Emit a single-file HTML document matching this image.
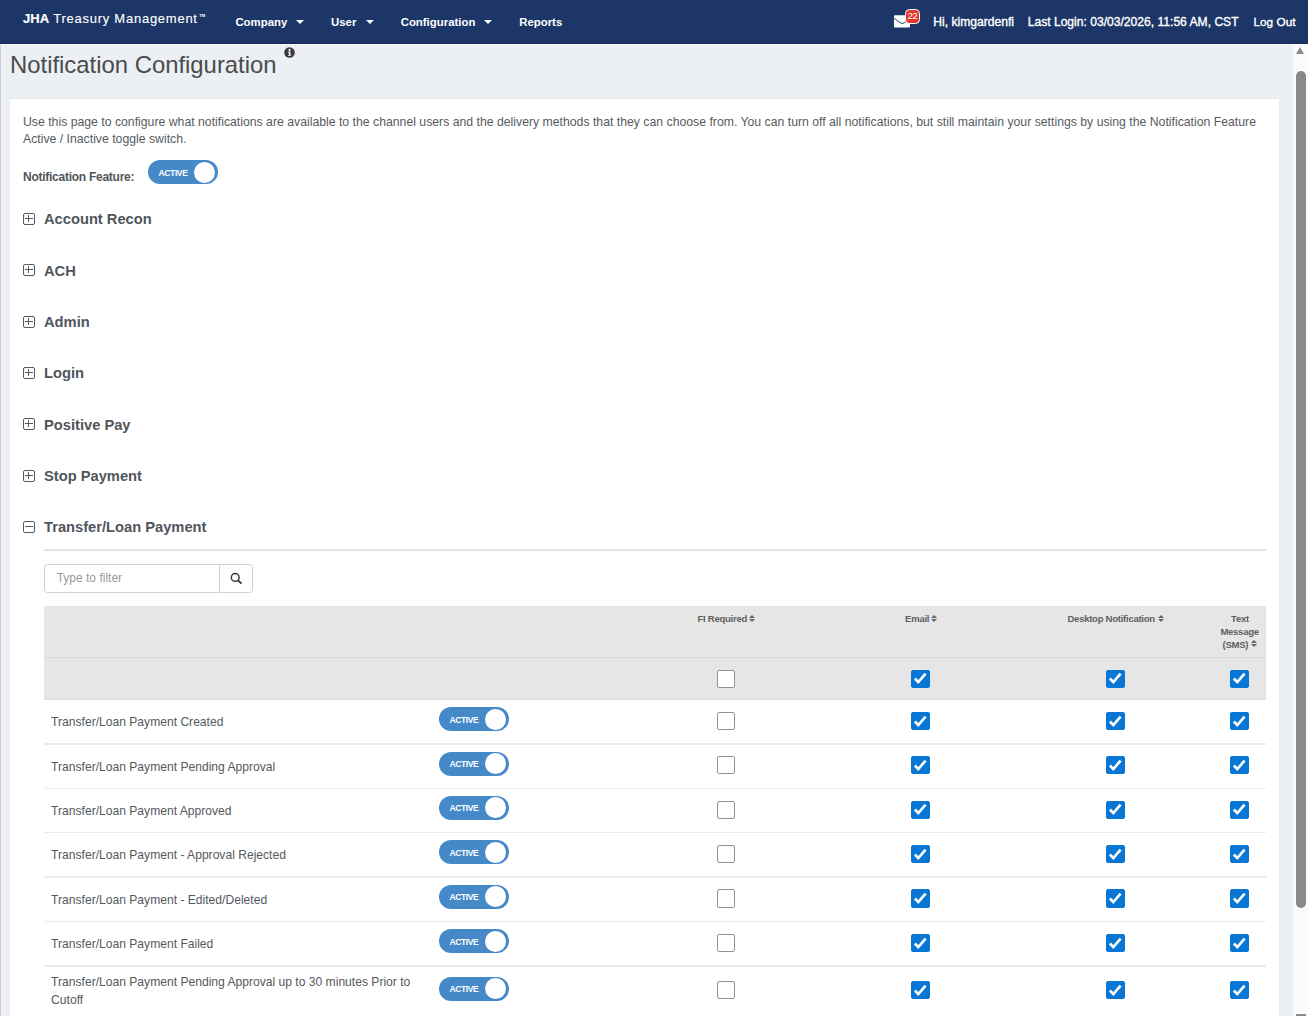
<!DOCTYPE html>
<html><head><meta charset="utf-8"><title>Notification Configuration</title>
<style>
*{box-sizing:border-box;margin:0;padding:0}
html,body{width:1308px;height:1016px;overflow:hidden;background:#ecf0f4;font-family:"Liberation Sans",sans-serif}
.t{position:absolute;white-space:nowrap}
#hdr{position:absolute;left:0;top:0;width:1308px;height:44px;background:#1d3668;border-bottom:2px solid #18305f}
#bg{position:absolute;left:0;top:44px;width:1293px;height:972px;background:#ecf0f4;border-top:1px solid #f4f4f2}
#ledge{position:absolute;left:0;top:45px;width:1px;height:971px;background:#c9cdd2}
.caret{position:absolute;width:0;height:0;border-left:4px solid transparent;border-right:4px solid transparent;border-top:4.5px solid #fff}
#badge{position:absolute;left:905px;top:8.8px;width:15.2px;height:15.2px;border-radius:4.5px;background:#e13b30;border:1.3px solid #fff;color:#fff;font-size:9.3px;line-height:12.2px;text-align:center;letter-spacing:-0.3px}
#info{position:absolute;left:283.6px;top:47px}
#card{position:absolute;left:9.1px;top:98.2px;width:1271px;height:940px;background:#fff;border:1px solid #e7ebef;border-radius:2px}
.tog{position:absolute;width:69.5px;height:24px;border-radius:12px;background:#4689c9}
.tog span{position:absolute;left:10.3px;top:7.4px;font-size:8.6px;line-height:11px;font-weight:bold;color:#fff;letter-spacing:-0.45px}
.tog i{position:absolute;right:2.9px;top:1.4px;width:21px;height:21px;border-radius:50%;background:#fff}
.pm{position:absolute;width:12px;height:12px;border:1px solid #555a62;border-radius:2px}
.pm:before{content:"";position:absolute;left:1px;top:4px;width:8px;height:1px;background:#555a62}
.pm:after{content:"";position:absolute;left:4px;top:1px;width:1px;height:7px;background:#555a62}
.pm.minus:after{display:none}
#hr{position:absolute;left:44px;top:549px;width:1222px;height:2px;background:#e4e4e4}
#filter{position:absolute;left:44px;top:563.6px;width:176px;height:29.4px;border:1.3px solid #d0d0d0;border-radius:3.5px 0 0 3.5px}
#fbtn{position:absolute;left:219px;top:563.6px;width:33.5px;height:29.4px;border:1.3px solid #d0d0d0;border-radius:0 3.5px 3.5px 0}
#th1{position:absolute;left:44px;top:606px;width:1222px;height:52px;background:#e6e6e6;border-bottom:1px solid #d9d9d9}
#th2{position:absolute;left:44px;top:658px;width:1222px;height:41.6px;background:#e6e6e6;border-bottom:1px solid #dddddd}
.sort{position:absolute;width:6px;height:8px}
.sort:before{content:"";position:absolute;left:0;top:0;border-left:3px solid transparent;border-right:3px solid transparent;border-bottom:3.3px solid #666}
.sort:after{content:"";position:absolute;left:0;top:4.1px;border-left:3px solid transparent;border-right:3px solid transparent;border-top:3.3px solid #666}
.cb{position:absolute;width:18.3px;height:18.2px;border:1.25px solid #939393;border-radius:2px;background:#fff}
.cb.on{background:#0876d4;border-color:#0876d4}
.cb svg{position:absolute;left:-1.25px;top:-1.25px}
.rowb{position:absolute;left:44px;width:1222px;height:1.5px;background:#ebebeb}
#sb{position:absolute;left:1293px;top:44px;width:15px;height:972px;background:#fafafa}
#sbup{position:absolute;left:1296px;top:47px;width:0;height:0;border-left:4.75px solid transparent;border-right:4.75px solid transparent;border-bottom:7px solid #8a8a8a}
#sbdn{position:absolute;left:1296px;top:1014px;width:9.5px;height:2px;background:#8a8a8a}
#thumb{position:absolute;left:1296px;top:71px;width:9.5px;height:836.5px;border-radius:5px;background:#898989}
</style></head>
<body>
<div id="hdr"></div>
<div class="t" style="left:23.00px;top:11.00px;font-size:13px;line-height:15.6px;color:#fff;font-weight:bold;letter-spacing:0.1px;-webkit-text-stroke:0.2px #fff;">JHA</div>
<div class="t" style="left:53.20px;top:11.20px;font-size:13px;line-height:15.6px;color:#fff;letter-spacing:0.75px;-webkit-text-stroke:0.12px #fff;">Treasury Management</div>
<div class="t" style="left:199.3px;top:13px;font-size:4.2px;line-height:5px;color:#fff;font-weight:bold;letter-spacing:-0.2px">TM</div>
<div class="t" style="left:235.40px;top:15.91px;font-size:11.4px;line-height:13.68px;color:#fff;font-weight:bold;">Company</div>
<div class="t" style="left:331.00px;top:15.91px;font-size:11.4px;line-height:13.68px;color:#fff;font-weight:bold;">User</div>
<div class="t" style="left:400.70px;top:15.91px;font-size:11.4px;line-height:13.68px;color:#fff;font-weight:bold;">Configuration</div>
<div class="t" style="left:519.20px;top:15.91px;font-size:11.4px;line-height:13.68px;color:#fff;font-weight:bold;">Reports</div>
<div class="caret" style="left:295.6px;top:20.3px"></div>
<div class="caret" style="left:365.7px;top:20.3px"></div>
<div class="caret" style="left:483.6px;top:20.3px"></div>
<svg style="position:absolute;left:893px;top:14px" width="20" height="16" viewBox="0 0 20 16">
<rect x="1" y="1.2" width="16" height="12.3" rx="0.8" fill="#fff"/>
<path d="M1.2 4.2 Q5.5 8.2 9.3 9.6 Q11.5 8.8 13.5 7.2" stroke="#1d3668" stroke-width="1" fill="none"/>
</svg>
<div id="badge">22</div>
<div class="t" style="left:933.30px;top:15.05px;font-size:12.1px;line-height:14.52px;color:#fff;-webkit-text-stroke:0.35px #fff;">Hi, kimgardenfi</div>
<div class="t" style="left:1027.70px;top:15.05px;font-size:12.1px;line-height:14.52px;color:#fff;-webkit-text-stroke:0.35px #fff;">Last Login: 03/03/2026, 11:56 AM, CST</div>
<div class="t" style="left:1253.50px;top:15.33px;font-size:11.8px;line-height:14.16px;color:#fff;-webkit-text-stroke:0.35px #fff;">Log Out</div>
<div id="bg"></div><div id="ledge"></div>
<div class="t" style="left:10.00px;top:50.82px;font-size:23.86px;line-height:28.63px;color:#4b4b4b;">Notification Configuration</div>
<svg id="info" width="11" height="11" viewBox="0 0 11 11"><circle cx="5.5" cy="5.5" r="5.3" fill="#3b3b3b"/><circle cx="5.6" cy="2.9" r="1.05" fill="#fff"/><path d="M4.2 4.6 H6.4 V7.9 H7.1 V8.8 H4.1 V7.9 H4.8 V5.5 H4.2 Z" fill="#fff"/></svg>
<div id="card"></div>
<div class="t" style="left:23.00px;top:114.60px;font-size:12.26px;line-height:14.71px;color:#575b61;">Use this page to configure what notifications are available to the channel users and the delivery methods that they can choose from. You can turn off all notifications, but still maintain your settings by using the Notification Feature</div>
<div class="t" style="left:23.00px;top:131.50px;font-size:12.26px;line-height:14.71px;color:#575b61;">Active / Inactive toggle switch.</div>
<div class="t" style="left:23.00px;top:169.84px;font-size:12px;line-height:14.4px;color:#50555c;font-weight:bold;letter-spacing:-0.26px;">Notification Feature:</div>
<div class="tog" style="left:148.3px;top:160.2px"><span>ACTIVE</span><i></i></div>
<div class="pm" style="left:23px;top:213px"></div>
<div class="t" style="left:44.00px;top:211.44px;font-size:14.7px;line-height:17.64px;color:#50555c;font-weight:bold;">Account Recon</div>
<div class="pm" style="left:23px;top:264px"></div>
<div class="t" style="left:44.00px;top:262.77px;font-size:14.7px;line-height:17.64px;color:#50555c;font-weight:bold;">ACH</div>
<div class="pm" style="left:23px;top:316px"></div>
<div class="t" style="left:44.00px;top:314.10px;font-size:14.7px;line-height:17.64px;color:#50555c;font-weight:bold;">Admin</div>
<div class="pm" style="left:23px;top:367px"></div>
<div class="t" style="left:44.00px;top:365.43px;font-size:14.7px;line-height:17.64px;color:#50555c;font-weight:bold;">Login</div>
<div class="pm" style="left:23px;top:418px"></div>
<div class="t" style="left:44.00px;top:416.76px;font-size:14.7px;line-height:17.64px;color:#50555c;font-weight:bold;">Positive Pay</div>
<div class="pm" style="left:23px;top:470px"></div>
<div class="t" style="left:44.00px;top:468.09px;font-size:14.7px;line-height:17.64px;color:#50555c;font-weight:bold;">Stop Payment</div>
<div class="pm minus" style="left:23px;top:521px"></div>
<div class="t" style="left:44.00px;top:519.42px;font-size:14.7px;line-height:17.64px;color:#50555c;font-weight:bold;">Transfer/Loan Payment</div>
<div id="hr"></div>
<div id="filter"></div><div id="fbtn"></div>
<div class="t" style="left:56.70px;top:571.34px;font-size:12px;line-height:14.4px;color:#9a9a9a;">Type to filter</div>
<svg style="position:absolute;left:229.6px;top:571.6px" width="13" height="13" viewBox="0 0 13 13">
<circle cx="5.25" cy="5.4" r="3.9" stroke="#333" stroke-width="1.45" fill="none"/>
<path d="M8.1 8.3 L11 11.2" stroke="#333" stroke-width="1.7" stroke-linecap="round"/></svg>
<div id="th1"></div><div id="th2"></div>
<div class="t" style="left:697.50px;top:613.41px;font-size:9.5px;line-height:11.4px;color:#5f5f5f;font-weight:bold;letter-spacing:-0.25px;">FI Required</div>
<div class="sort" style="left:748.8px;top:615px"></div>
<div class="t" style="left:905.10px;top:613.41px;font-size:9.5px;line-height:11.4px;color:#5f5f5f;font-weight:bold;letter-spacing:-0.25px;">Email</div>
<div class="sort" style="left:930.6px;top:615px"></div>
<div class="t" style="left:1067.50px;top:613.41px;font-size:9.5px;line-height:11.4px;color:#5f5f5f;font-weight:bold;letter-spacing:-0.25px;">Desktop Notification</div>
<div class="sort" style="left:1157.7px;top:615px"></div>
<div class="t" style="left:1210.00px;top:613.41px;font-size:9.5px;line-height:11.4px;color:#5f5f5f;font-weight:bold;letter-spacing:-0.25px;width:60px;text-align:center;">Text</div>
<div class="t" style="left:1209.60px;top:626.21px;font-size:9.5px;line-height:11.4px;color:#5f5f5f;font-weight:bold;letter-spacing:-0.25px;width:60px;text-align:center;">Message</div>
<div class="t" style="left:1222.50px;top:638.81px;font-size:9.5px;line-height:11.4px;color:#5f5f5f;font-weight:bold;letter-spacing:-0.25px;">(SMS)</div>
<div class="sort" style="left:1251.2px;top:640.3px"></div>
<div class="cb" style="left:716.85px;top:669.70px"></div>
<div class="cb on" style="left:911.45px;top:669.70px"><svg width="19" height="19" viewBox="0 0 19 19"><path d="M3.9 9.5 L7.3 13.1 L14.6 4.6" stroke="#fff" stroke-width="2.7" fill="none"/></svg></div>
<div class="cb on" style="left:1106.25px;top:669.70px"><svg width="19" height="19" viewBox="0 0 19 19"><path d="M3.9 9.5 L7.3 13.1 L14.6 4.6" stroke="#fff" stroke-width="2.7" fill="none"/></svg></div>
<div class="cb on" style="left:1230.45px;top:669.70px"><svg width="19" height="19" viewBox="0 0 19 19"><path d="M3.9 9.5 L7.3 13.1 L14.6 4.6" stroke="#fff" stroke-width="2.7" fill="none"/></svg></div>
<div class="rowb" style="top:743.15px"></div>
<div class="t" style="left:51.10px;top:715.15px;font-size:12.1px;line-height:14.52px;color:#545960;">Transfer/Loan Payment Created</div>
<div class="tog" style="left:439.1px;top:707.2px"><span>ACTIVE</span><i></i></div>
<div class="cb" style="left:716.85px;top:711.75px"></div>
<div class="cb on" style="left:911.45px;top:711.75px"><svg width="19" height="19" viewBox="0 0 19 19"><path d="M3.9 9.5 L7.3 13.1 L14.6 4.6" stroke="#fff" stroke-width="2.7" fill="none"/></svg></div>
<div class="cb on" style="left:1106.25px;top:711.75px"><svg width="19" height="19" viewBox="0 0 19 19"><path d="M3.9 9.5 L7.3 13.1 L14.6 4.6" stroke="#fff" stroke-width="2.7" fill="none"/></svg></div>
<div class="cb on" style="left:1230.45px;top:711.75px"><svg width="19" height="19" viewBox="0 0 19 19"><path d="M3.9 9.5 L7.3 13.1 L14.6 4.6" stroke="#fff" stroke-width="2.7" fill="none"/></svg></div>
<div class="rowb" style="top:787.55px"></div>
<div class="t" style="left:51.10px;top:759.55px;font-size:12.1px;line-height:14.52px;color:#545960;">Transfer/Loan Payment Pending Approval</div>
<div class="tog" style="left:439.1px;top:751.6px"><span>ACTIVE</span><i></i></div>
<div class="cb" style="left:716.85px;top:756.15px"></div>
<div class="cb on" style="left:911.45px;top:756.15px"><svg width="19" height="19" viewBox="0 0 19 19"><path d="M3.9 9.5 L7.3 13.1 L14.6 4.6" stroke="#fff" stroke-width="2.7" fill="none"/></svg></div>
<div class="cb on" style="left:1106.25px;top:756.15px"><svg width="19" height="19" viewBox="0 0 19 19"><path d="M3.9 9.5 L7.3 13.1 L14.6 4.6" stroke="#fff" stroke-width="2.7" fill="none"/></svg></div>
<div class="cb on" style="left:1230.45px;top:756.15px"><svg width="19" height="19" viewBox="0 0 19 19"><path d="M3.9 9.5 L7.3 13.1 L14.6 4.6" stroke="#fff" stroke-width="2.7" fill="none"/></svg></div>
<div class="rowb" style="top:831.95px"></div>
<div class="t" style="left:51.10px;top:803.95px;font-size:12.1px;line-height:14.52px;color:#545960;">Transfer/Loan Payment Approved</div>
<div class="tog" style="left:439.1px;top:796.0px"><span>ACTIVE</span><i></i></div>
<div class="cb" style="left:716.85px;top:800.55px"></div>
<div class="cb on" style="left:911.45px;top:800.55px"><svg width="19" height="19" viewBox="0 0 19 19"><path d="M3.9 9.5 L7.3 13.1 L14.6 4.6" stroke="#fff" stroke-width="2.7" fill="none"/></svg></div>
<div class="cb on" style="left:1106.25px;top:800.55px"><svg width="19" height="19" viewBox="0 0 19 19"><path d="M3.9 9.5 L7.3 13.1 L14.6 4.6" stroke="#fff" stroke-width="2.7" fill="none"/></svg></div>
<div class="cb on" style="left:1230.45px;top:800.55px"><svg width="19" height="19" viewBox="0 0 19 19"><path d="M3.9 9.5 L7.3 13.1 L14.6 4.6" stroke="#fff" stroke-width="2.7" fill="none"/></svg></div>
<div class="rowb" style="top:876.35px"></div>
<div class="t" style="left:51.10px;top:848.35px;font-size:12.1px;line-height:14.52px;color:#545960;">Transfer/Loan Payment - Approval Rejected</div>
<div class="tog" style="left:439.1px;top:840.4000000000001px"><span>ACTIVE</span><i></i></div>
<div class="cb" style="left:716.85px;top:844.95px"></div>
<div class="cb on" style="left:911.45px;top:844.95px"><svg width="19" height="19" viewBox="0 0 19 19"><path d="M3.9 9.5 L7.3 13.1 L14.6 4.6" stroke="#fff" stroke-width="2.7" fill="none"/></svg></div>
<div class="cb on" style="left:1106.25px;top:844.95px"><svg width="19" height="19" viewBox="0 0 19 19"><path d="M3.9 9.5 L7.3 13.1 L14.6 4.6" stroke="#fff" stroke-width="2.7" fill="none"/></svg></div>
<div class="cb on" style="left:1230.45px;top:844.95px"><svg width="19" height="19" viewBox="0 0 19 19"><path d="M3.9 9.5 L7.3 13.1 L14.6 4.6" stroke="#fff" stroke-width="2.7" fill="none"/></svg></div>
<div class="rowb" style="top:920.75px"></div>
<div class="t" style="left:51.10px;top:892.75px;font-size:12.1px;line-height:14.52px;color:#545960;">Transfer/Loan Payment - Edited/Deleted</div>
<div class="tog" style="left:439.1px;top:884.8000000000001px"><span>ACTIVE</span><i></i></div>
<div class="cb" style="left:716.85px;top:889.35px"></div>
<div class="cb on" style="left:911.45px;top:889.35px"><svg width="19" height="19" viewBox="0 0 19 19"><path d="M3.9 9.5 L7.3 13.1 L14.6 4.6" stroke="#fff" stroke-width="2.7" fill="none"/></svg></div>
<div class="cb on" style="left:1106.25px;top:889.35px"><svg width="19" height="19" viewBox="0 0 19 19"><path d="M3.9 9.5 L7.3 13.1 L14.6 4.6" stroke="#fff" stroke-width="2.7" fill="none"/></svg></div>
<div class="cb on" style="left:1230.45px;top:889.35px"><svg width="19" height="19" viewBox="0 0 19 19"><path d="M3.9 9.5 L7.3 13.1 L14.6 4.6" stroke="#fff" stroke-width="2.7" fill="none"/></svg></div>
<div class="rowb" style="top:965.15px"></div>
<div class="t" style="left:51.10px;top:937.15px;font-size:12.1px;line-height:14.52px;color:#545960;">Transfer/Loan Payment Failed</div>
<div class="tog" style="left:439.1px;top:929.2px"><span>ACTIVE</span><i></i></div>
<div class="cb" style="left:716.85px;top:933.75px"></div>
<div class="cb on" style="left:911.45px;top:933.75px"><svg width="19" height="19" viewBox="0 0 19 19"><path d="M3.9 9.5 L7.3 13.1 L14.6 4.6" stroke="#fff" stroke-width="2.7" fill="none"/></svg></div>
<div class="cb on" style="left:1106.25px;top:933.75px"><svg width="19" height="19" viewBox="0 0 19 19"><path d="M3.9 9.5 L7.3 13.1 L14.6 4.6" stroke="#fff" stroke-width="2.7" fill="none"/></svg></div>
<div class="cb on" style="left:1230.45px;top:933.75px"><svg width="19" height="19" viewBox="0 0 19 19"><path d="M3.9 9.5 L7.3 13.1 L14.6 4.6" stroke="#fff" stroke-width="2.7" fill="none"/></svg></div>
<div class="t" style="left:51.10px;top:974.95px;font-size:12.1px;line-height:14.52px;color:#545960;">Transfer/Loan Payment Pending Approval up to 30 minutes Prior to</div>
<div class="t" style="left:51.10px;top:992.85px;font-size:12.1px;line-height:14.52px;color:#545960;">Cutoff</div>
<div class="tog" style="left:439.1px;top:976.6px"><span>ACTIVE</span><i></i></div>
<div class="cb" style="left:716.85px;top:981.10px"></div>
<div class="cb on" style="left:911.45px;top:981.10px"><svg width="19" height="19" viewBox="0 0 19 19"><path d="M3.9 9.5 L7.3 13.1 L14.6 4.6" stroke="#fff" stroke-width="2.7" fill="none"/></svg></div>
<div class="cb on" style="left:1106.25px;top:981.10px"><svg width="19" height="19" viewBox="0 0 19 19"><path d="M3.9 9.5 L7.3 13.1 L14.6 4.6" stroke="#fff" stroke-width="2.7" fill="none"/></svg></div>
<div class="cb on" style="left:1230.45px;top:981.10px"><svg width="19" height="19" viewBox="0 0 19 19"><path d="M3.9 9.5 L7.3 13.1 L14.6 4.6" stroke="#fff" stroke-width="2.7" fill="none"/></svg></div>
<div id="sb"></div><div id="sbup"></div><div id="thumb"></div><div id="sbdn"></div>

</body></html>
